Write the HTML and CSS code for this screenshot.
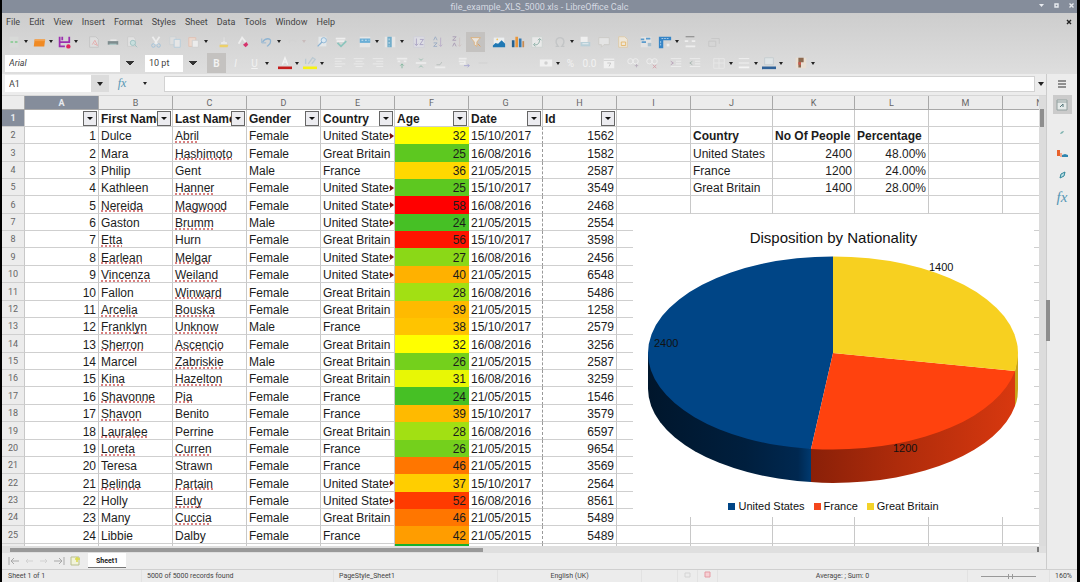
FILE: index.html
```
<!DOCTYPE html>
<html lang="en">
<head>
    <meta charset="UTF-8">
    <meta name="viewport" content="width=device-width, initial-scale=1.0">
    <title>file_example_XLS_5000.xls - LibreOffice Calc</title>
    <link rel="stylesheet" href="styles.css">
</head>

<body>
    <header class="titlebar">
        <span class="title">file_example_XLS_5000.xls - LibreOffice Calc</span>
        <div class="window-buttons">
            <button aria-label="Minimize"><svg width="7" height="7" viewBox="0 0 7 7"><path d="M1 2h5L3.500 5z" fill="#e8ebf0"/></svg></button>
            <button aria-label="Maximize"><svg width="7" height="7" viewBox="0 0 7 7"><path d="M2 2h3v3H2z" fill="none" stroke="#e8ebf0" stroke-width="1.400"/></svg></button>
            <button aria-label="Close"><svg width="7" height="7" viewBox="0 0 7 7"><path d="M1.500 1.500l4 4M5.500 1.500l-4 4" stroke="#e8ebf0" stroke-width="1.400"/></svg></button>
        </div>
    </header>

    <div class="bars">
        <nav class="menubar">
            <button>File</button>
            <button>Edit</button>
            <button>View</button>
            <button>Insert</button>
            <button>Format</button>
            <button>Styles</button>
            <button>Sheet</button>
            <button>Data</button>
            <button>Tools</button>
            <button>Window</button>
            <button>Help</button>
            <button class="close-doc" aria-label="Close document"><svg width="6" height="6" viewBox="0 0 6 6"><path d="M1 1l4 4M5 1L1 5" stroke="#222" stroke-width="1.400"/></svg></button>
        </nav>

        <!-- Standard toolbar -->
        <div class="toolbar">
            <button class="tool" aria-label="New"><svg viewBox="0 0 16 16"><path d="M3 2h10v12H3z" fill="#d8dad8"/><path d="M4 8h3M9 8h3" stroke="#7fc98a" stroke-width="1.500"/></svg></button>
            <button class="caret" aria-label="New options"></button>
            <button class="tool" aria-label="Open"><svg viewBox="0 0 16 16"><path d="M3 5h12l-1 8H2z" fill="#f08a24"/><path d="M3 5h12v2H3z" fill="#f5a04a"/></svg></button>
            <button class="caret" aria-label="Open options"></button>
            <button class="tool" aria-label="Save"><svg viewBox="0 0 16 16"><path d="M3 2v12M14 2v7M3 8h11M3 13h6M6 2v4" fill="none" stroke="#9b2fae" stroke-width="2"/><circle cx="13" cy="13" r="2.500" fill="#e0245e"/></svg></button>
            <button class="caret" aria-label="Save options"></button>
            <span class="sep"></span>
            <button class="tool" aria-label="Export as PDF"><svg viewBox="0 0 16 16"><path d="M3 2h7l3 3v9H3z" fill="#dedede" stroke="#c4c4c4"/><path d="M6 11l3-5 3 6-4-2" fill="none" stroke="#e3a7a7"/></svg></button>
            <button class="tool" aria-label="Print"><svg viewBox="0 0 16 16"><path d="M5 5h7v3H5z" fill="#e8e8e8"/><path d="M2 7h12v4H2z" fill="#7e8c8e"/><path d="M4 10h8v1H4z" fill="#b9dcd8"/></svg></button>
            <button class="tool" aria-label="Print preview"><svg viewBox="0 0 16 16"><path d="M3 2h7l2 3v8H3z" fill="#e2e2e2" stroke="#cbcbcb"/><circle cx="9" cy="9" r="3" fill="#c8dedd" stroke="#9cc0c0"/><path d="M11 11l3 3" stroke="#9cc0c0"/></svg></button>
            <span class="sep"></span>
            <button class="tool" aria-label="Cut"><svg viewBox="0 0 16 16"><path d="M4 2l6 9M12 2L6 11" stroke="#eee" stroke-width="2"/><circle cx="5" cy="12" r="2" fill="none" stroke="#9dbfd8"/><circle cx="11" cy="12" r="2" fill="none" stroke="#9dbfd8"/></svg></button>
            <button class="tool" aria-label="Copy"><svg viewBox="0 0 16 16"><path d="M2 2h7v9H2z" fill="#dedede" stroke="#ccd0d3"/><path d="M7 5h7v9H7z" fill="#e6e6e6" stroke="#b3cbdb"/></svg></button>
            <button class="tool" aria-label="Paste"><svg viewBox="0 0 16 16"><path d="M2 3h8v10H2z" fill="#ecd9ce" stroke="#e0c1b2"/><path d="M6 6h7v8H6z" fill="#ececec" stroke="#cfcfcf"/></svg></button>
            <button class="caret" aria-label="Paste options"></button>
            <span class="sep"></span>
            <button class="tool" aria-label="Clone formatting"><svg viewBox="0 0 16 16"><path d="M7 2h2v5l3 1v3H4V8l3-1z" fill="#e8e8e8" stroke="#d2d2d2"/><path d="M3 11h10l-1 3H3z" fill="#ecd069"/></svg></button>
            <button class="tool" aria-label="Clear formatting"><svg viewBox="0 0 16 16"><path d="M3 10l4-7 4 5" fill="none" stroke="#eee" stroke-width="2"/><path d="M8 11l4-3 2 3-3 3z" fill="#d6336c"/></svg></button>
            <span class="sep"></span>
            <button class="tool" aria-label="Undo"><svg viewBox="0 0 16 16"><path d="M3 8c3-5 10-5 9 0 0 3-3 4-4 5" fill="none" stroke="#8fb4d2" stroke-width="1.500"/><path d="M2 4v5h5" fill="none" stroke="#8fb4d2"/></svg></button>
            <button class="caret" aria-label="Undo history"></button>
            <button class="tool" aria-label="Redo" disabled><svg viewBox="0 0 16 16"><path d="M13 8c-3-4-9-3-8 1" fill="none" stroke="#d3d3d3" stroke-width="1.500"/></svg></button>
            <button class="caret faint" aria-label="Redo history" disabled></button>
            <span class="sep"></span>
            <button class="tool" aria-label="Find and replace"><svg viewBox="0 0 16 16"><path d="M4 2h9v11H4z" fill="#e4e8ea"/><circle cx="10" cy="6" r="3" fill="#dbe9f3" stroke="#8ab2d2"/><path d="M8 8l-5 5" stroke="#8ab2d2" stroke-width="1.500"/></svg></button>
            <button class="tool" aria-label="Spelling"><svg viewBox="0 0 16 16"><path d="M2 4h11M3 7h9" stroke="#eee" stroke-width="2"/><path d="M4 9l4 4 6-6" fill="none" stroke="#8cc5bd" stroke-width="2"/></svg></button>
            <span class="sep"></span>
            <button class="tool" aria-label="Row"><svg viewBox="0 0 16 16"><path d="M2 2h12v12H2z" fill="#e6e6e6"/><path d="M2 4h12v5H2z" fill="#6aaed6"/><path d="M4 6h2M8 6h2M12 6h1" stroke="#dcebf5"/></svg></button>
            <button class="caret" aria-label="Row options"></button>
            <button class="tool" aria-label="Column"><svg viewBox="0 0 16 16"><path d="M2 2h12v12H2z" fill="#e6e6e6"/><path d="M5 2h5v12H5z" fill="#72adca"/><path d="M7 4v2M7 8v2M7 12v1" stroke="#dcebf5"/></svg></button>
            <button class="caret" aria-label="Column options"></button>
            <span class="sep thin"></span>
            <button class="tool" aria-label="Sort"><svg viewBox="0 0 16 16"><path d="M2 2h12v12H2z" fill="#dedee4" stroke="#cfcfd8"/><path d="M5 4v8M3 10l2 2 2-2M9 5h4l-4 6h4" fill="none" stroke="#a69fc0"/></svg></button>
            <button class="tool" aria-label="Sort ascending"><svg viewBox="0 0 16 16"><path d="M3 6l2-4 2 4M3 9h4l-4 4h4" fill="none" stroke="#99aac4"/><path d="M11 3v10M9 11l2 2 2-2" fill="none" stroke="#b9adc8"/></svg></button>
            <button class="tool" aria-label="Sort descending"><svg viewBox="0 0 16 16"><path d="M3 2h4L3 6h4M3 13l2-4 2 4" fill="none" stroke="#a79ab4"/><path d="M11 3v10M9 11l2 2 2-2" fill="none" stroke="#cfc4c4"/></svg></button>
            <button class="tool pressed" aria-label="AutoFilter"><svg viewBox="0 0 16 16"><path d="M2 3h11l-4 5v5l-3-2V8z" fill="#e9e6e1" stroke="#ddb17b"/><path d="M10 10l3 3" stroke="#e39a52"/></svg></button>
            <span class="sep thin"></span>
            <button class="tool" aria-label="Insert image"><svg viewBox="0 0 16 16"><path d="M2 3h12v10H2z" fill="#eceff0"/><path d="M1 14v-2l3-3 3 1 4-4 4 4v4z" fill="#1f78b4"/><circle cx="6" cy="5" r="1" fill="#efc25c"/></svg></button>
            <button class="tool" aria-label="Insert chart"><svg viewBox="0 0 16 16"><path d="M1 6h3v8H1z" fill="#25608e"/><path d="M5 2h3v12H5z" fill="#e8963a"/><path d="M9 4h3v10H9z" fill="#3478b0"/><path d="M13 7h2v7h-2z" fill="#c78a52"/></svg></button>
            <button class="tool" aria-label="Pivot table"><svg viewBox="0 0 16 16"><path d="M2 2h12v12H2z" fill="#e9e9e9" stroke="#cdd2d0"/><path d="M5 11c4 1 6-2 6-6M9 6l2-2 2 2M6 9l-2 2 2 2" fill="none" stroke="#7ea69b"/></svg></button>
            <span class="sep thin"></span>
            <button class="tool" aria-label="Special character"><svg viewBox="0 0 16 16"><path d="M3 13h3c-4-4-3-10 2-10s6 6 2 10h3" fill="none" stroke="#c3c5c6" stroke-width="1.500"/></svg></button>
            <button class="caret" aria-label="Special character options"></button>
            <button class="tool" aria-label="Hyperlink"><svg viewBox="0 0 16 16"><path d="M3 2h8v6H3z" fill="#efefef"/><path d="M3 8h11v5H3z" fill="#b8cfd8"/><path d="M5 10h7" stroke="#eef3f5"/></svg></button>
            <button class="tool" aria-label="Comment"><svg viewBox="0 0 16 16"><path d="M2 3h12v8H8l-3 3v-3H2z" fill="#e4e4e4" stroke="#cccac6"/></svg></button>
            <button class="tool" aria-label="Headers and footers"><svg viewBox="0 0 16 16"><path d="M3 2h7l3 3v9H3z" fill="#eee7da" stroke="#ddc9a8"/><path d="M6 8h5v4H6z" fill="none" stroke="#e5b565"/></svg></button>
            <span class="sep thin"></span>
            <button class="tool" aria-label="Freeze rows"><svg viewBox="0 0 16 16"><path d="M2 2h12v12H2z" fill="#e3e3e3"/><path d="M2 5h4M8 4h5M3 8h5" stroke="#5b9bcc" stroke-width="2"/><path d="M10 9h4v4h-4z" fill="#a7bfce"/></svg></button>
            <button class="tool" aria-label="Split window"><svg viewBox="0 0 16 16"><path d="M1 2h14v4H6v9H1z" fill="#3584c6"/><path d="M4 4h9M3 7v6" stroke="#b5d4ec" stroke-dasharray="2 1"/><path d="M10 10h3v3h-3z" fill="#eee"/></svg></button>
            <button class="caret" aria-label="Split options"></button>
            <button class="tool" aria-label="Show draw functions"><svg viewBox="0 0 16 16"><path d="M3 2h10" stroke="#777"/><path d="M2 7h4M10 7h4M3 13h11" stroke="#eee" stroke-width="2"/></svg></button>
            <span class="sep"></span>
            <button class="tool" aria-label="Define range"><svg viewBox="0 0 16 16"><path d="M2 7h8v6H2zM5 4h9v6" fill="none" stroke="#c6c6c6"/></svg></button>
        </div>

        <!-- Formatting toolbar -->
        <div class="toolbar formatting">
            <select class="combo font-name" aria-label="Font name">
                <option>Arial</option>
            </select>
            <select class="combo font-size" aria-label="Font size">
                <option>10 pt</option>
            </select>
            <button class="tool letter pressed" aria-label="Bold"><b>B</b></button>
            <button class="tool letter" aria-label="Italic"><i>I</i></button>
            <button class="tool letter" aria-label="Underline"><u>U</u></button>
            <button class="caret" aria-label="Underline options"></button>
            <span class="sep"></span>
            <button class="tool" aria-label="Font color"><svg viewBox="0 0 16 16"><path d="M5 10l3-8 3 8M6 7h4" fill="none" stroke="#f2f2f2" stroke-width="1.500"/><path d="M0 12h16v3H0z" fill="#c41c1c"/></svg></button>
            <button class="caret" aria-label="Font color options"></button>
            <button class="tool" aria-label="Highlighting"><svg viewBox="0 0 16 16"><path d="M3 9V3M6 9l5-7 3 2-4 5" fill="none" stroke="#bccad2" stroke-width="1.500"/><path d="M0 12h16v3H0z" fill="#f7f314"/></svg></button>
            <button class="caret" aria-label="Highlighting options"></button>
            <span class="sep"></span>
            <button class="tool" aria-label="Align left"><svg viewBox="0 0 16 16"><path d="M2 3h12M2 6h8M2 9h12M2 12h8" stroke="#ececec"/></svg></button>
            <button class="tool" aria-label="Align center"><svg viewBox="0 0 16 16"><path d="M2 3h12M4 6h8M2 9h12M4 12h8" stroke="#ececec"/></svg></button>
            <button class="tool" aria-label="Align right"><svg viewBox="0 0 16 16"><path d="M2 3h12M6 6h8M2 9h12M6 12h8" stroke="#ececec"/></svg></button>
            <span class="sep"></span>
            <button class="tool" aria-label="Align top"><svg viewBox="0 0 16 16"><path d="M2 3h12M3 6h3M10 6h3" stroke="#ececec" stroke-width="2"/><path d="M8 14V9M6 11l2-2 2 2" fill="none" stroke="#7fb59c"/></svg></button>
            <button class="tool" aria-label="Center vertically"><svg viewBox="0 0 16 16"><path d="M2 8h12" stroke="#ececec" stroke-width="2"/><path d="M6 3l2 2 2-2M6 13l2-2 2 2" fill="none" stroke="#8fb8a8"/></svg></button>
            <button class="tool" aria-label="Align bottom"><svg viewBox="0 0 16 16"><path d="M2 13h12" stroke="#ececec" stroke-width="2"/><path d="M4 10h4l2-3" fill="none" stroke="#b5bdb9"/></svg></button>
            <span class="sep"></span>
            <button class="tool" aria-label="Wrap text"><svg viewBox="0 0 16 16"><path d="M2 3h9M2 6h7v3H3" stroke="#ececec" stroke-width="2" fill="none"/><path d="M8 11h6M12 9l2 2-2 2" fill="none" stroke="#a5a5d0"/></svg></button>
            <button class="tool" aria-label="Merge cells"><svg viewBox="0 0 16 16"><path d="M3 8h10" stroke="#cfcfcf"/></svg></button>
            <span class="space"></span>
            <button class="tool" aria-label="Currency"><svg viewBox="0 0 16 16"><path d="M1 4h14v8H1z" fill="#f0f0f0"/><circle cx="8" cy="8" r="2" fill="#d0d0d0"/></svg></button>
            <button class="caret" aria-label="Currency options"></button>
            <button class="tool letter" aria-label="Percent">%</button>
            <button class="tool letter" aria-label="Number">0.0</button>
            <button class="tool" aria-label="Date"><svg viewBox="0 0 16 16"><path d="M2 3h12v11H2z" fill="#f0f0f0"/><path d="M6 8h4l-2 4" fill="none" stroke="#c4c4c4"/><path d="M2 5h12" stroke="#ccc"/></svg></button>
            <span class="sep"></span>
            <button class="tool" aria-label="Add decimal place"><svg viewBox="0 0 16 16"><circle cx="5" cy="6" r="3" fill="none" stroke="#efefef"/><circle cx="11" cy="6" r="3" fill="none" stroke="#efefef"/><path d="M12 9v4M10 11h4" stroke="#b8aebc"/></svg></button>
            <button class="tool" aria-label="Delete decimal place"><svg viewBox="0 0 16 16"><circle cx="5" cy="6" r="3" fill="none" stroke="#efefef"/><circle cx="11" cy="6" r="3" fill="none" stroke="#efefef"/><path d="M9 10l4 4M13 10l-4 4" stroke="#d39aa4"/></svg></button>
            <span class="sep"></span>
            <button class="tool" aria-label="Increase indent"><svg viewBox="0 0 16 16"><path d="M2 3h12M8 6h6M8 9h6M2 12h12" stroke="#eee"/><path d="M2 6l3 2-3 2" fill="none" stroke="#b69db6"/></svg></button>
            <button class="tool" aria-label="Decrease indent"><svg viewBox="0 0 16 16"><path d="M2 3h12M8 6h6M8 9h6M2 12h12" stroke="#eee"/><path d="M5 6L2 8l3 2" fill="none" stroke="#a5b5ae"/></svg></button>
            <span class="sep"></span>
            <button class="tool" aria-label="Borders"><svg viewBox="0 0 16 16"><path d="M2 3h12v11H2zM8 3v11M2 8h12" fill="none" stroke="#e8e8e8"/></svg></button>
            <button class="caret" aria-label="Border options"></button>
            <button class="tool" aria-label="Border style"><svg viewBox="0 0 16 16"><path d="M2 3h12M2 8h12" stroke="#f4f4f4"/><path d="M2 13h12" stroke="#f4f4f4" stroke-width="2"/></svg></button>
            <button class="caret" aria-label="Border style options"></button>
            <button class="tool" aria-label="Border color"><svg viewBox="0 0 16 16"><path d="M3 2h10v8H3z" fill="#dfe4e6" stroke="#c3cccf"/><path d="M0 12h16v3H0z" fill="#2f6299"/></svg></button>
            <button class="caret" aria-label="Border color options"></button>
            <span class="sep wide"></span>
            <button class="tool" aria-label="Conditional formatting"><svg viewBox="0 0 16 16"><path d="M2 2h12v12H2z" fill="#eadfd2"/><path d="M5 2h6v5H8v6H5z" fill="#8d6a50"/><path d="M5 7h3v3H5z" fill="#cc5a4e"/></svg></button>
            <button class="caret" aria-label="Conditional options"></button>
        </div>
    </div>

    <div class="workspace">
        <main class="document">
            <div class="formula-bar">
                <div class="name-box">
                    <input type="text" value="A1" aria-label="Name box">
                    <button class="caret" aria-label="Cell names"></button>
                </div>
                <button class="fx" aria-label="Function wizard"><i>fx</i></button>
                <button class="caret" aria-label="Select function"></button>
                <input class="formula" type="text" aria-label="Formula">
                <button class="caret" aria-label="Expand formula bar"></button>
            </div>

            <div class="grid-row">
                <div class="sheet">
                    <table class="cells">
                        <colgroup id="columns"></colgroup>
                        <thead id="letters"></thead>
                        <tbody id="rows"></tbody>
                    </table>

                    <figure class="chart">
                        <figcaption>Disposition by Nationality</figcaption>
                        <svg class="pie" viewBox="0 34 401 246" role="img" aria-label="Pie chart">
                            <defs>
                                <linearGradient id="blueSide" x1="0" x2="1" y1="0" y2="0">
                                    <stop offset="0" stop-color="#00162c"/>
                                    <stop offset="0.600" stop-color="#001f3e"/>
                                    <stop offset="0.920" stop-color="#002850"/>
                                    <stop offset="1" stop-color="#003a70"/>
                                </linearGradient>
                                <linearGradient id="redSide" x1="0" x2="1" y1="0" y2="0">
                                    <stop offset="0" stop-color="#8a2008"/>
                                    <stop offset="0.450" stop-color="#b02c0b"/>
                                    <stop offset="1" stop-color="#d8380f"/>
                                </linearGradient>
                            </defs>
                            <path d="M15 139v36A185 94 0 0 0 178 268v-33z" fill="url(#blueSide)"/>
                            <path d="M178 235v33q11 1 22 1A185 94 0 0 0 382 192v-35z" fill="url(#redSide)"/>
                            <path d="M382 157l3-18v36q0 10-3 17z" fill="#c9a51a"/>
                            <path d="M200 139V42.500A185 96.500 0 0 0 15 139A185 96.500 0 0 0 178 235z" fill="#004586"/>
                            <path d="M200 139l-22 96q11 .5 22 .5A185 96.500 0 0 0 382 157z" fill="#ff420e"/>
                            <path d="M200 139V42.500A185 96.500 0 0 1 385 139q0 9-3 18z" fill="#f7d020"/>
                            <text x="21" y="133">2400</text>
                            <text x="296" y="57">1400</text>
                            <text x="260" y="238">1200</text>
                        </svg>
                        <ul class="legend">
                            <li class="us">United States</li>
                            <li class="fr">France</li>
                            <li class="gb">Great Britain</li>
                        </ul>
                    </figure>
                </div>
                <div class="vscroll"><div class="thumb"></div></div>
            </div>

            <div class="hscroll"><div class="thumb"></div><div class="end"></div></div>

            <div class="tabs">
                <button class="nav" aria-label="First sheet"><svg width="12" height="10" viewBox="0 0 12 10"><path d="M1 1v8M11 5H3M6 2L3 5l3 3" fill="none" stroke="#a8a8a8"/></svg></button>
                <button class="nav" aria-label="Previous sheet"><svg width="12" height="10" viewBox="0 0 12 10"><path d="M10 5H3M5 3L3 5l2 2" fill="none" stroke="#d2d2d2"/></svg></button>
                <button class="nav" aria-label="Next sheet"><svg width="12" height="10" viewBox="0 0 12 10"><path d="M2 5h7M7 3l2 2-2 2" fill="none" stroke="#d2d2d2"/></svg></button>
                <button class="nav" aria-label="Last sheet"><svg width="12" height="10" viewBox="0 0 12 10"><path d="M11 1v8M1 5h8M6 2l3 3-3 3" fill="none" stroke="#a8a8a8"/></svg></button>
                <button class="nav add" aria-label="Add sheet"><svg width="12" height="10" viewBox="0 0 12 10"><path d="M2 1h8v8H2z" fill="#f1f3da" stroke="#b9bf8e"/><path d="M8 1v5M6 3h5" stroke="#d9d94a" stroke-width="1.500"/></svg></button>
                <button class="tab">Sheet1</button>
            </div>
        </main>

        <aside class="sidebar">
            <button class="side menu" aria-label="Sidebar settings"><svg width="10" height="8" viewBox="0 0 10 8"><path d="M1 1h8M1 4h8M1 7h8" stroke="#333"/></svg></button>
            <button class="side active" aria-label="Properties"><svg width="14" height="12" viewBox="0 0 14 12"><path d="M2 1h10v10H2z" fill="#e5eae9" stroke="#92a09f"/><path d="M2 3h10" stroke="#92a09f"/><path d="M5 8l3-3M8 5v3" stroke="#55767a"/></svg></button>
            <button class="side" aria-label="Styles"><svg width="14" height="12" viewBox="0 0 14 12"><path d="M5 7q1-3 4-3-1 3-4 3z" fill="#7fb3b0"/></svg></button>
            <button class="side" aria-label="Gallery"><svg width="14" height="12" viewBox="0 0 14 12"><path d="M2 2h3v6H2z" fill="#e8622c"/><path d="M5 5h2v4H5z" fill="#f0a890"/><path d="M7 9V7l3-1 3 1v2z" fill="#2f86b0"/></svg></button>
            <button class="side" aria-label="Navigator"><svg width="14" height="12" viewBox="0 0 14 12"><path d="M5 9l1-4 4-2-1 4z" fill="#b9dde4" stroke="#2f8699"/></svg></button>
            <button class="side fx" aria-label="Functions"><i>fx</i></button>
            <div class="splitter"></div>
        </aside>
    </div>

    <footer class="statusbar">
        <span class="sheet-count">Sheet 1 of 1</span>
        <span class="records">5000 of 5000 records found</span>
        <span class="page-style">PageStyle_Sheet1</span>
        <span class="language">English (UK)</span>
        <span class="insert-mode"></span>
        <span class="mark"><svg width="7" height="7" viewBox="0 0 7 7"><path d="M1 2h5v4H1z" fill="none" stroke="#d4d4d4"/></svg></span>
        <span class="mark"><svg width="7" height="7" viewBox="0 0 7 7"><path d="M1 1h5v5H1z" fill="#f6d0d4" stroke="#e59aa3"/></svg></span>
        <span class="summary">Average: ; Sum: 0</span>
        <span class="zoom"><input type="range" min="0" max="100" value="54" aria-label="Zoom"></span>
        <span class="percent">160%</span>
    </footer>

    <script src="script.js"></script>
</body>

</html>
```

FILE: styles.css
```
* {
    box-sizing: border-box;
}

body {
    font-family: Roboto, sans-serif;
    font-size: 9px;
    color: #444;
    background-color: #ececec;
    margin: 0;
    height: 100vh;
    display: flex;
    flex-direction: column;
    border-left: 2px solid #000;
    border-right: 3px solid #000;
    overflow: hidden;
}

button {
    font: inherit;
    color: inherit;
    background: none;
    border: none;
    padding: 0;
    display: flex;
    align-items: center;
    justify-content: center;
    flex: none;
}

input,
select {
    font: inherit;
    color: inherit;
    border: none;
    border-radius: 0;
    outline: none;
}

.titlebar {
    position: relative;
    height: 13px;
    flex: none;
    display: flex;
    align-items: center;
    justify-content: center;
    background-color: #858d9b;
    color: #d5dae2;
}

.title {
    line-height: 12px;
}

.window-buttons {
    position: absolute;
    right: 2px;
    top: 2px;
    display: flex;
    gap: 8px;
}

.bars {
    background: linear-gradient(#cdcdcd, #dedede);
    flex: none;
}

/* Menu */
.menubar {
    height: 18px;
    display: flex;
    align-items: center;
    gap: 9px;
    padding: 0 5px 0 4px;
}

.menubar .close-doc {
    margin-left: auto;
}

/* Toolbars */
.toolbar {
    height: 21px;
    display: flex;
    align-items: center;
    padding-left: 2px;
}

.tool {
    width: 19px;
    height: 20px;
}

.tool svg {
    width: 14px;
    height: 14px;
}

.tool.pressed {
    background-color: #c4c2c0;
}

.tool.letter {
    font-size: 10px;
    color: #f2f2f2;
}

.caret {
    width: 6px;
    height: 16px;
}

.caret::after {
    content: "";
    border: 2px solid transparent;
    border-top: 3px solid #222;
    border-bottom: 0;
}

.caret.faint::after {
    border-top-color: #c9bcbc;
}

.sep {
    width: 5px;
    flex: none;
}

.sep.thin {
    width: 4px;
}

.sep.wide {
    width: 7px;
}

.space {
    width: 44px;
    flex: none;
}

/* White field with a small arrow drawn from two triangles */
.combo {
    appearance: none;
    height: 17px;
    padding: 0 4px;
    flex: none;
    background:
        linear-gradient(#fff, #fff) no-repeat 0 0 / calc(100% - 18px) 100%,
        linear-gradient(to bottom right, #333 50%, transparent 51%) no-repeat right 4px center / 4px 4px,
        linear-gradient(to bottom left, #333 50%, transparent 51%) no-repeat right 8px center / 4px 4px;
}

.formatting {
    height: 22px;
    padding-left: 3px;
}

.font-name {
    width: 133px;
    margin-right: 7px;
    font-style: italic;
}

.font-size {
    width: 56px;
    margin-right: 6px;
}

/* Document and sidebar */
.workspace {
    flex: 1;
    min-height: 0;
    display: flex;
}

.document {
    flex: 1;
    min-width: 0;
    display: flex;
    flex-direction: column;
}

.formula-bar {
    height: 22px;
    flex: none;
    display: flex;
    align-items: center;
    padding: 0 0 2px 3px;
    border-bottom: 1px solid #d6d6d6;
}

.name-box {
    display: flex;
    height: 17px;
}

.name-box input {
    width: 86px;
    padding: 0 4px;
}

.name-box .caret {
    width: 18px;
    height: 17px;
    background-color: #dcdcdc;
}

.name-box .caret::after {
    border-width: 4px 3px 0;
}

.fx {
    font-family: "Liberation Serif", serif;
    font-size: 12px;
    color: #5596b4;
}

.formula-bar .fx {
    width: 26px;
}

.formula-bar .fx + .caret {
    margin: 0 16px 0 7px;
}

.formula {
    flex: 1;
    min-width: 0;
    height: 16px;
    border: 1px solid #d2d2d2;
    background-color: #fff;
}

.formula + .caret {
    width: 11px;
}

.formula + .caret::after {
    border-width: 4px 3px 0;
}

.grid-row {
    flex: 1;
    min-height: 0;
    display: flex;
}

.sheet {
    position: relative;
    flex: 1;
    min-width: 0;
    overflow: hidden;
    background-color: #fff;
}

/* The last column runs on under the scrollbar */
.cells {
    width: calc(100% + 38px);
    table-layout: fixed;
    border-collapse: separate;
    border-spacing: 0;
    font-family: "Liberation Sans", Arial, sans-serif;
    font-size: 12px;
    line-height: 14px;
    color: #1c1c1c;
}

col.num {
    width: 23px;
}

col.normal {
    width: 74px;
}

col.broad {
    width: 82px;
}

.cells th,
.cells td {
    height: 17px;
    padding: 2px 2px 0;
    border-right: 1px solid #c8c8c8;
    border-bottom: 1px solid #cfcfcf;
    overflow: hidden;
    white-space: nowrap;
    text-align: left;
}

/* Row pitch is a little over 17px */
.cells tbody tr:nth-child(8n+3) > *,
.cells tbody tr:nth-child(8n+6) > *,
.cells tbody tr:nth-child(8n+9) > * {
    height: 18px;
}

.cells thead th,
.cells tbody th.rownum {
    padding-top: 0;
    font-family: Roboto, sans-serif;
    font-size: 9px;
    font-weight: normal;
    line-height: 12px;
    text-align: center;
    color: #666;
    background-color: #ececec;
}

.cells thead th {
    height: 14px;
    border-color: #a8a8a8;
}

.cells thead th.current,
.cells tbody th.current {
    background-color: #858d9b;
    color: #e8ebef;
    font-weight: bold;
}

.cells td.right {
    text-align: right;
}

.cells td.bold {
    font-weight: bold;
}

.cells td.head {
    position: relative;
    font-weight: bold;
}

.cells td.age {
    border-color: transparent;
}

.cells td.page-break {
    border-right: 1px dashed #999;
}

.cells td.cut {
    position: relative;
}

.cells td.cut::before {
    content: "";
    position: absolute;
    right: 0;
    top: 0;
    width: 4px;
    height: 100%;
    background-color: #fff;
}

.cells td.cut::after {
    content: "";
    position: absolute;
    right: 0;
    top: 6px;
    border: 3px solid transparent;
    border-left: 4px solid #7a0d0d;
    border-right: 0;
}

.misspelled {
    text-decoration: underline dotted #d98080 2px;
    text-underline-offset: 1px;
    text-decoration-skip-ink: none;
}

.filter {
    position: absolute;
    right: 1px;
    top: 1px;
    width: 14px;
    height: 15px;
    border: 1px solid #666;
    background-color: #ececf0;
}

.filter::after {
    content: "";
    border: 3px solid transparent;
    border-top: 3px solid #111;
    border-bottom: 0;
}

/* Chart */
.chart {
    position: absolute;
    left: 631px;
    top: 118px;
    width: 401px;
    margin: 0;
    padding-top: 14px;
    background-color: #fff;
    font-family: "Liberation Sans", Arial, sans-serif;
    font-size: 11px;
    color: #111;
}

.chart figcaption {
    font-size: 15px;
    line-height: 20px;
    text-align: center;
}

.pie {
    display: block;
    width: 100%;
}

.pie text {
    font-size: 11px;
    fill: #111;
}

.legend {
    display: flex;
    justify-content: center;
    gap: 9px;
    margin: 0;
    padding: 4px 0 3px;
    list-style: none;
    line-height: 16px;
}

.legend li {
    display: flex;
    align-items: center;
    gap: 3px;
}

.legend li::before {
    content: "";
    width: 7px;
    height: 7px;
}

.legend .us::before {
    background-color: #004586;
}

.legend .fr::before {
    background-color: #f4461c;
}

.legend .gb::before {
    background-color: #f3d229;
}

/* Scrollbars */
.vscroll {
    width: 7px;
    flex: none;
    padding: 13px 2px 0 1px;
    background-color: #dcdcdc;
}

.vscroll .thumb {
    height: 18px;
    background-color: #8e8e8e;
}

.hscroll {
    height: 7px;
    flex: none;
    display: flex;
    justify-content: space-between;
    align-items: center;
    padding: 0 7px 0 8px;
    background-color: #dfdfdf;
}

.hscroll .thumb {
    width: 46%;
    height: 4px;
    background-color: #999;
}

.hscroll .end {
    width: 2px;
    height: 5px;
    background-color: #777;
}

.tabs {
    height: 16px;
    flex: none;
    display: flex;
    align-items: flex-start;
    padding-left: 4px;
}

.nav {
    width: 15px;
    height: 15px;
}

.nav.add {
    width: 18px;
    margin-right: 4px;
}

.tab {
    width: 38px;
    height: 15px;
    padding-top: 1px;
    background-color: #fff;
    border-bottom: 1px solid #777;
    font-size: 7px;
    font-weight: bold;
    color: #222;
}

.sidebar {
    position: relative;
    width: 31px;
    flex: none;
    display: flex;
    flex-direction: column;
    align-items: center;
    gap: 2px;
    border-left: 1px solid #ccc;
}

.side {
    width: 19px;
    height: 19px;
}

.side.active {
    background-color: #cbcbcb;
    margin-bottom: 7px;
}

.side.fx {
    font-size: 15px;
    margin-top: 2px;
}

.splitter {
    position: absolute;
    left: -1px;
    top: calc(50% - 22px);
    width: 4px;
    height: 41px;
    background-color: #8c8c8c;
}

/* Status bar */
.statusbar {
    height: 13px;
    flex: none;
    display: flex;
    align-items: center;
    border-top: 1px solid #cfcfcf;
    font-size: 7px;
    line-height: 12px;
}

.statusbar span {
    flex: none;
    height: 12px;
    border-right: 1px solid #e2e2e2;
    text-align: center;
}

.statusbar .sheet-count {
    width: 140px;
    padding-left: 6px;
    text-align: left;
}

.statusbar .records {
    width: 192px;
    padding-left: 5px;
    text-align: left;
}

.statusbar .page-style {
    width: 164px;
    padding-left: 5px;
    text-align: left;
}

.statusbar .language {
    width: 144px;
}

.statusbar .insert-mode {
    width: 36px;
}

.statusbar .mark {
    width: 20px;
}

.statusbar .summary {
    flex: 1;
}

.statusbar .zoom {
    width: 82px;
    display: flex;
    align-items: center;
    justify-content: center;
}

.statusbar .percent {
    width: 27px;
    border-right: none;
}

.zoom input {
    appearance: none;
    width: 55px;
    height: 5px;
    margin: 0;
    background: linear-gradient(#999, #999) no-repeat 0 2px / 100% 1px;
}

.zoom input::-webkit-slider-thumb {
    appearance: none;
    width: 5px;
    height: 5px;
    border: 1px solid #999;
    border-width: 0 1px;
}
```

FILE: script.js
```
const letters = ['A', 'B', 'C', 'D', 'E', 'F', 'G', 'H', 'I', 'J', 'K', 'L', 'M', 'N'];
const headings = ['', 'First Name', 'Last Name', 'Gender', 'Country', 'Age', 'Date', 'Id'];

// A trailing ~ marks a word that the spell checker does not know
const people = [
    ['Dulce', 'Abril~', 'Female', 'United States', 32, '15/10/2017', 1562],
    ['Mara', 'Hashimoto~', 'Female', 'Great Britain', 25, '16/08/2016', 1582],
    ['Philip', 'Gent', 'Male', 'France', 36, '21/05/2015', 2587],
    ['Kathleen', 'Hanner~', 'Female', 'United States', 25, '15/10/2017', 3549],
    ['Nereida~', 'Magwood~', 'Female', 'United States', 58, '16/08/2016', 2468],
    ['Gaston', 'Brumm~', 'Male', 'United States', 24, '21/05/2015', 2554],
    ['Etta~', 'Hurn', 'Female', 'Great Britain', 56, '15/10/2017', 3598],
    ['Earlean~', 'Melgar~', 'Female', 'United States', 27, '16/08/2016', 2456],
    ['Vincenza~', 'Weiland~', 'Female', 'United States', 40, '21/05/2015', 6548],
    ['Fallon', 'Winward~', 'Female', 'Great Britain', 28, '16/08/2016', 5486],
    ['Arcelia~', 'Bouska~', 'Female', 'Great Britain', 39, '21/05/2015', 1258],
    ['Franklyn~', 'Unknow~', 'Male', 'France', 38, '15/10/2017', 2579],
    ['Sherron~', 'Ascencio~', 'Female', 'Great Britain', 32, '16/08/2016', 3256],
    ['Marcel', 'Zabriskie~', 'Male', 'Great Britain', 26, '21/05/2015', 2587],
    ['Kina~', 'Hazelton~', 'Female', 'Great Britain', 31, '16/08/2016', 3259],
    ['Shavonne~', 'Pia~', 'Female', 'France', 24, '21/05/2015', 1546],
    ['Shavon~', 'Benito', 'Female', 'France', 39, '15/10/2017', 3579],
    ['Lauralee~', 'Perrine', 'Female', 'Great Britain', 28, '16/08/2016', 6597],
    ['Loreta~', 'Curren~', 'Female', 'France', 26, '21/05/2015', 9654],
    ['Teresa', 'Strawn', 'Female', 'France', 46, '21/05/2015', 3569],
    ['Belinda~', 'Partain~', 'Female', 'United States', 37, '15/10/2017', 2564],
    ['Holly', 'Eudy~', 'Female', 'United States', 52, '16/08/2016', 8561],
    ['Many', 'Cuccia~', 'Female', 'Great Britain', 46, '21/05/2015', 5489],
    ['Libbie', 'Dalby', 'Female', 'France', 42, '21/05/2015', 5489],
    ['', '', '', '', 22, '', '']
];

const summary = [
    ['Country', 'No Of People', 'Percentage'],
    ['United States', '2400', '48.00%'],
    ['France', '1200', '24.00%'],
    ['Great Britain', '1400', '28.00%']
];

// Green at 21, yellow at 32, red at 58
function ageColor(age) {
    if (age >= 32) {
        return `rgb(255, ${Math.round(255 * (58 - age) / 26)}, 0)`;
    }
    const t = (32 - age) / 11;
    return `rgb(${Math.round(255 - 255 * t)}, ${Math.round(255 - 86 * t)}, ${Math.round(51 * t)})`;
}

function addCell(row, text, className) {
    const cell = row.insertCell();
    if (className) cell.className = className;
    if (String(text).endsWith('~')) {
        const word = document.createElement('span');
        word.className = 'misspelled';
        word.textContent = text.slice(0, -1);
        cell.appendChild(word);
    } else {
        cell.textContent = text;
    }
    return cell;
}

function addHeader(row, text, className) {
    const cell = document.createElement('th');
    if (className) cell.className = className;
    cell.textContent = text;
    row.appendChild(cell);
}

function renderColumns() {
    const group = document.getElementById('columns');
    ['', ...letters].forEach((letter) => {
        const col = document.createElement('col');
        if (letter === '') col.className = 'num';
        else if (letter === 'J' || letter === 'K') col.className = 'broad';
        else if (letter !== 'N') col.className = 'normal';
        group.appendChild(col);
    });

    const row = document.getElementById('letters').insertRow();
    addHeader(row, '');
    letters.forEach((letter) => addHeader(row, letter, letter === 'A' ? 'current' : ''));
}

function renderRows() {
    const body = document.getElementById('rows');

    const first = body.insertRow();
    addHeader(first, 1, 'rownum current');
    headings.forEach((heading) => {
        const cell = addCell(first, heading, 'head');
        const button = document.createElement('button');
        button.className = 'filter';
        button.setAttribute('aria-label', `Filter ${heading}`);
        cell.appendChild(button);
    });
    for (let i = 0; i < 6; i++) addCell(first, '');

    people.forEach((person, index) => {
        const [name, surname, gender, country, age, date, id] = person;
        const row = body.insertRow();
        addHeader(row, name ? index + 2 : '', 'rownum');
        addCell(row, name ? index + 1 : '', 'right');
        addCell(row, name);
        addCell(row, surname);
        addCell(row, gender);
        addCell(row, country, country === 'United States' ? 'cut' : '');
        addCell(row, name ? age : '', 'right age').style.backgroundColor = ageColor(age);
        addCell(row, date, 'page-break');
        addCell(row, id, 'right');
        addCell(row, '');
        const line = summary[index] || ['', '', ''];
        line.forEach((text, i) => {
            addCell(row, text, index === 0 ? 'bold' : i > 0 ? 'right' : '');
        });
        addCell(row, '');
        addCell(row, '');
    });
}

renderColumns();
renderRows();
```
